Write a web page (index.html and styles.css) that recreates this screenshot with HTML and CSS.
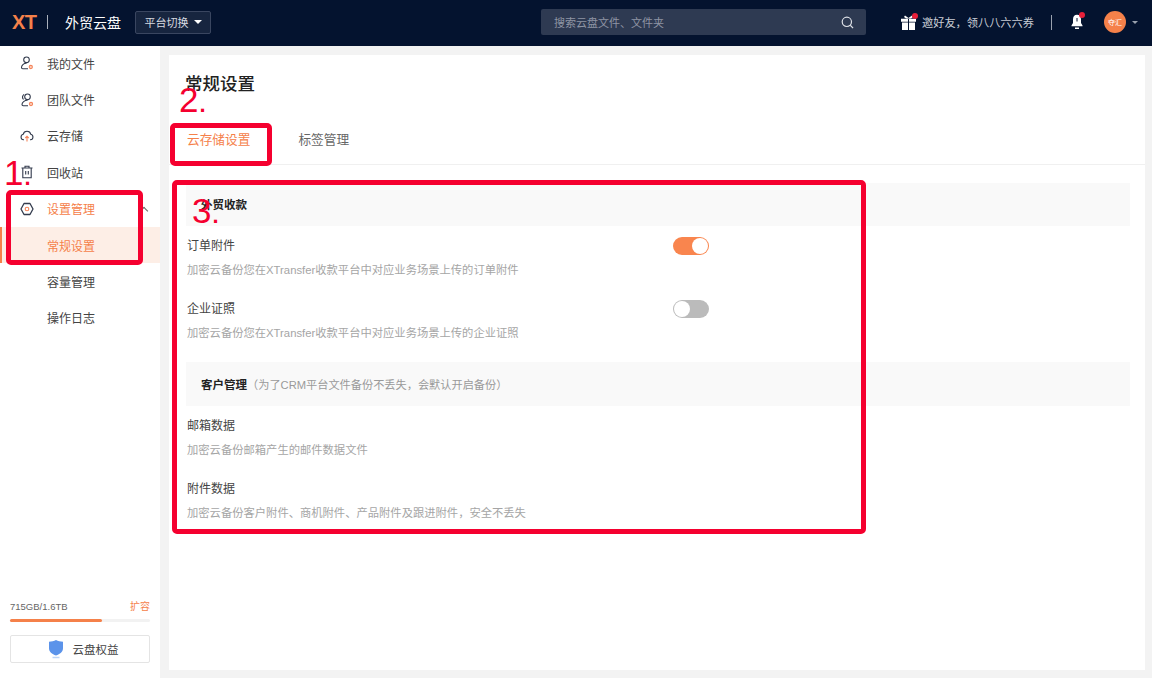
FILE: index.html
```html
<!DOCTYPE html>
<html lang="zh">
<head>
    <meta charset="UTF-8">
    <title>外贸云盘</title>
    <link rel="stylesheet" href="styles.css">
</head>
<body>
    <header class="topbar">
        <div class="logo">XT</div>
        <span class="logo-line"></span>
        <div class="brand">外贸云盘</div>
        <button class="switch">平台切换<span class="caret"></span></button>
        <div class="search">
            <span>搜索云盘文件、文件夹</span>
            <svg width="13" height="13" viewBox="0 0 14 14" fill="none" stroke="#dfe2e8" stroke-width="1.300"><circle cx="6.300" cy="6.300" r="5"/><path d="M10 10 13 13"/></svg>
        </div>
        <div class="invite">
            <span class="gift">
                <svg width="15" height="15" viewBox="0 0 15 15" fill="#fff"><path d="M4 0.500 7.500 3 11 .5l1 1.500-2 1.500H5L3 2z"/><path d="M0 3.800h7v3H0zM8 3.800h7v3H8zM1 7.600h6V15H1zM8 7.600h6V15H8z"/></svg>
                <i class="dot"></i>
            </span>
            <span>邀好友，领八八六六券</span>
        </div>
        <span class="top-line"></span>
        <span class="bell">
            <svg width="12" height="16" viewBox="0 0 12 16" fill="#fff"><path d="M6 0.800c-2.600 0-4 2-4 4.600v3.600L.5 11.400v.9h11v-.9L10 9V5.400C10 2.800 8.600.8 6 .8zM4 13.600h4V15H4z"/><path d="M6 4v3.500" stroke="#04132f" stroke-width="1"/></svg>
            <i class="dot"></i>
        </span>
        <span class="avatar">夺汇</span>
        <span class="caret small"></span>
    </header>

    <div class="main">
        <aside class="sidebar">
            <nav class="menu">
                <a class="menu-item">
                    <svg class="icon" width="14" height="14" viewBox="0 0 14 14" fill="none" stroke="#333b4d" stroke-width="1.100"><circle cx="6.500" cy="3.800" r="2.800"/><path d="M6.500 7.300c-3 0-5 2-5 4.200 0 .8.500 1.200 1.200 1.200H8"/><circle cx="10.800" cy="11" r="1.600" fill="#fbd5c4" stroke="#f5845a"/></svg>
                    我的文件
                </a>
                <a class="menu-item">
                    <svg class="icon" width="14" height="14" viewBox="0 0 14 14" fill="none" stroke="#333b4d" stroke-width="1.100"><circle cx="7.500" cy="3.800" r="2.800"/><path d="M4 1.300C2.300 2.800 2.300 5 3.500 6.500M7.500 7.300c-3 0-5.500 2-5.500 4.200 0 .8.500 1.200 1.200 1.200H8"/><circle cx="11" cy="11" r="1.600" fill="#fbd5c4" stroke="#f5845a"/></svg>
                    团队文件
                </a>
                <a class="menu-item">
                    <svg class="icon" width="14" height="14" viewBox="0 0 14 14" fill="none" stroke="#333b4d" stroke-width="1.100"><path d="M4 10.800H3.500a2.800 2.800 0 0 1-.3-5.500 3.900 3.900 0 0 1 7.600 0 2.800 2.800 0 0 1-.3 5.500H10"/><path d="M7 12.500V7.500M5.300 9 7 7.300 8.700 9" stroke="#f5845a"/></svg>
                    云存储
                </a>
                <a class="menu-item">
                    <svg class="icon" width="14" height="14" viewBox="0 0 14 14" fill="none" stroke="#333b4d" stroke-width="1.100"><path d="M1.500 3h11M5 3V1.300h4V3M2.800 3v9.700h8.400V3M5.700 6v3.500M8.300 6v3.500"/></svg>
                    回收站
                </a>
                <a class="menu-item open">
                    <svg class="icon" width="14" height="14" viewBox="0 0 14 14" fill="none" stroke="#333b4d" stroke-width="1.300"><path d="M4 1.500h6L13 7l-3 5.500H4L1 7z" stroke-linejoin="round"/><circle cx="7" cy="7" r="1.800" stroke="#f5845a" stroke-width="1.100"/></svg>
                    设置管理
                    <span class="chevron"></span>
                </a>
                <a class="menu-item sub active">常规设置</a>
                <a class="menu-item sub">容量管理</a>
                <a class="menu-item sub">操作日志</a>
            </nav>
            <div class="storage">
                <div class="storage-text">
                    <span>715GB/1.6TB</span>
                    <span class="expand">扩容</span>
                </div>
                <div class="storage-bar"><div class="storage-fill" style="width: 66%"></div></div>
                <button class="rights">
                    <svg width="16" height="20" viewBox="0 0 16 20"><path d="M8 1c2 1.200 4.500 1.700 7 1.700v6.500c0 3.500-3 6-7 7.300-4-1.300-7-3.800-7-7.300V2.700C3.500 2.700 6 2.200 8 1z" fill="#5b93ea"/><path d="M4.500 18.500h7" stroke="#bcd4f7" stroke-width="1.500"/></svg>
                    云盘权益
                </button>
            </div>
        </aside>

        <section class="content">
            <h1 class="page-title">常规设置</h1>
            <div class="tabs">
                <a class="tab active">云存储设置</a>
                <a class="tab">标签管理</a>
            </div>
            <div class="section-head first"><b>外贸收款</b></div>
            <div class="setting">
                <div>
                    <div class="setting-name">订单附件</div>
                    <div class="setting-desc">加密云备份您在XTransfer收款平台中对应业务场景上传的订单附件</div>
                </div>
                <span class="toggle on"></span>
            </div>
            <div class="setting">
                <div>
                    <div class="setting-name">企业证照</div>
                    <div class="setting-desc">加密云备份您在XTransfer收款平台中对应业务场景上传的企业证照</div>
                </div>
                <span class="toggle"></span>
            </div>
            <div class="section-head second"><b>客户管理</b><span>（为了CRM平台文件备份不丢失，会默认开启备份）</span></div>
            <div class="setting">
                <div>
                    <div class="setting-name">邮箱数据</div>
                    <div class="setting-desc">加密云备份邮箱产生的邮件数据文件</div>
                </div>
            </div>
            <div class="setting">
                <div>
                    <div class="setting-name">附件数据</div>
                    <div class="setting-desc">加密云备份客户附件、商机附件、产品附件及跟进附件，安全不丢失</div>
                </div>
            </div>
        </section>
    </div>

    <!-- red markup drawn over the screenshot -->
    <div class="mark box-1"></div>
    <div class="mark box-2"></div>
    <div class="mark box-3"></div>
    <div class="mark-num num-1">1<i>.</i></div>
    <div class="mark-num num-2">2<i>.</i></div>
    <div class="mark-num num-3">3<i>.</i></div>
</body>
</html>
```

FILE: styles.css
```css
* {
    box-sizing: border-box;
}
body {
    margin: 0;
    height: 678px;
    overflow: hidden;
    position: relative;
    background-color: #f3f3f3;
    font-family: "Liberation Sans", "Noto Sans CJK SC", sans-serif;
    font-size: 12px;
    color: #333;
}
.topbar {
    height: 46px;
    background-color: #04132f;
    display: flex;
    align-items: center;
    padding: 0 0 2px 12px;
    color: #fff;
}
.logo {
    flex: none;
    width: 24px;
    font-size: 20px;
    font-weight: bold;
    color: #f5814a;
    letter-spacing: -0.5px;
}
.logo-line {
    flex: none;
    width: 1px;
    height: 14px;
    background-color: #aab0bc;
    margin-left: 11px;
}
.brand {
    flex: none;
    font-size: 14px;
    margin-left: 17px;
    width: 57px;
    white-space: nowrap;
}
.switch {
    flex: none;
    width: 76px;
    height: 23px;
    margin-left: 13px;
    background-color: #17253f;
    border: 1px solid #3a4660;
    border-radius: 2px;
    color: #d8dbe1;
    font-family: inherit;
    font-size: 11px;
    display: flex;
    align-items: center;
    justify-content: center;
    gap: 5px;
    padding: 0;
}
.caret {
    flex: none;
    width: 0;
    height: 0;
    border-left: 4px solid transparent;
    border-right: 4px solid transparent;
    border-top: 4px solid #fff;
}
.caret.small {
    border-left-width: 3px;
    border-right-width: 3px;
    border-top: 3px solid #9aa1ae;
    margin-left: 6px;
}
.search {
    flex: none;
    width: 325px;
    height: 26px;
    margin-left: 330px;
    background-color: #2e3a52;
    border-radius: 2px;
    display: flex;
    align-items: center;
    justify-content: space-between;
    padding: 0 12px 0 13px;
    color: #8e95a4;
    font-size: 11px;
}
.invite {
    flex: none;
    display: flex;
    align-items: center;
    gap: 6px;
    margin-left: 35px;
    color: #c9cdd5;
    font-size: 11.200px;
    white-space: nowrap;
}
.gift, .bell {
    flex: none;
    position: relative;
    display: flex;
}
.dot {
    position: absolute;
    top: -2px;
    right: -2px;
    width: 6px;
    height: 6px;
    border-radius: 50%;
    background-color: #e8203a;
}
.top-line {
    flex: none;
    width: 1px;
    height: 15px;
    background-color: #9aa1ae;
    margin-left: 17px;
}
.bell {
    margin-left: 19px;
}
.avatar {
    flex: none;
    width: 22px;
    height: 22px;
    border-radius: 50%;
    background-color: #f5814a;
    color: #fff;
    font-size: 7px;
    margin-left: 21px;
    display: flex;
    align-items: center;
    justify-content: center;
}
.main {
    display: flex;
    height: 632px;
}
.sidebar {
    width: 160px;
    background-color: #fff;
    display: flex;
    flex-direction: column;
    justify-content: space-between;
}
.menu {
    margin-top: -1px;
}
.menu-item {
    height: 36.400px;
    display: flex;
    align-items: center;
    gap: 13px;
    padding-left: 20px;
    color: #444;
    position: relative;
}
.icon {
    flex: none;
}
.menu-item.open {
    color: #f5814a;
}
.menu-item.sub {
    padding-left: 47px;
}
.menu-item.active {
    background-color: #fdeee6;
    color: #f5814a;
}
.menu-item.active::before {
    content: "";
    position: absolute;
    left: 0;
    top: 0;
    width: 2px;
    height: 100%;
    background-color: #f5814a;
}
.chevron {
    position: absolute;
    left: 141px;
    top: 17px;
    width: 6px;
    height: 6px;
    border-top: 1px solid #666;
    border-left: 1px solid #666;
    transform: rotate(45deg);
}
.storage {
    padding: 0 10px 15px;
}
.storage-text {
    display: flex;
    justify-content: space-between;
    align-items: center;
    font-size: 9.500px;
    line-height: 14px;
    color: #666;
}
.expand {
    font-size: 10px;
    color: #f5814a;
}
.storage-bar {
    height: 3px;
    margin-top: 5px;
    background-color: #f2f2f2;
    border-radius: 2px;
}
.storage-fill {
    height: 100%;
    background-color: #f5814a;
    border-radius: 2px;
}
.rights {
    width: 100%;
    height: 28px;
    margin-top: 13px;
    background-color: #fff;
    border: 1px solid #e4e4e4;
    border-radius: 2px;
    font-family: inherit;
    font-size: 11.500px;
    color: #444;
    display: flex;
    align-items: center;
    justify-content: center;
    gap: 9px;
    padding: 0 0 0 6px;
}
.content {
    width: 976px;
    height: 615px;
    margin: 9px 0 0 9px;
    background-color: #fff;
}
.page-title {
    margin: 0;
    padding: 18px 0 0 16px;
    font-size: 17.500px;
    line-height: 22px;
    font-weight: 500;
    color: #222;
}
.tabs {
    display: flex;
    gap: 48px;
    height: 51px;
    margin-top: 19px;
    padding-left: 18px;
    border-bottom: 1px solid #f0f0f0;
    font-size: 12.700px;
    color: #666;
}
.tab {
    line-height: 52px;
}
.tab.active {
    color: #f5814a;
}
.section-head {
    height: 43px;
    margin: 18px 15px 0 17px;
    padding-left: 15px;
    background-color: #f9f9f9;
    display: flex;
    align-items: center;
    font-size: 11.500px;
    color: #999;
}
.section-head b {
    color: #222;
}
.section-head span {
    font-size: 11.200px;
}
.section-head.first {
    padding-bottom: 2px;
}
.section-head.second {
    height: 44px;
    margin-top: 11px;
}
.setting {
    width: 522px;
    height: 62.500px;
    margin-left: 18px;
    padding-top: 12px;
    display: flex;
    justify-content: space-between;
    align-items: flex-start;
}
.setting-name {
    font-size: 12px;
    line-height: 16px;
    color: #444;
}
.setting-desc {
    margin-top: 8px;
    font-size: 11.300px;
    line-height: 16px;
    color: #a5a5a5;
    white-space: nowrap;
}
.toggle {
    width: 36px;
    height: 18px;
    margin-top: -1px;
    border-radius: 9px;
    background-color: #bbb;
    position: relative;
}
.toggle::after {
    content: "";
    position: absolute;
    left: 1px;
    top: 1px;
    width: 16px;
    height: 16px;
    border-radius: 50%;
    background-color: #fff;
}
.toggle.on {
    background-color: #f9854e;
}
.toggle.on::after {
    left: 19px;
}
.mark {
    position: absolute;
    border: 5px solid #f5002f;
    border-radius: 5px;
}
.box-1 {
    left: 6px;
    top: 190px;
    width: 137px;
    height: 75px;
}
.box-2 {
    left: 170px;
    top: 123px;
    width: 102px;
    height: 43px;
}
.box-3 {
    left: 172px;
    top: 180px;
    width: 694px;
    height: 354px;
}
.mark-num {
    position: absolute;
    color: #f5002f;
    font-size: 35px;
    line-height: 38px;
    font-family: "Liberation Sans", sans-serif;
}
.mark-num i {
    font-style: normal;
    font-weight: bold;
    font-size: 22px;
    margin-left: 1px;
}
.num-1 {
    left: 4px;
    top: 154px;
}
.num-2 {
    left: 179px;
    top: 81px;
}
.num-3 {
    left: 192px;
    top: 192px;
}
```
